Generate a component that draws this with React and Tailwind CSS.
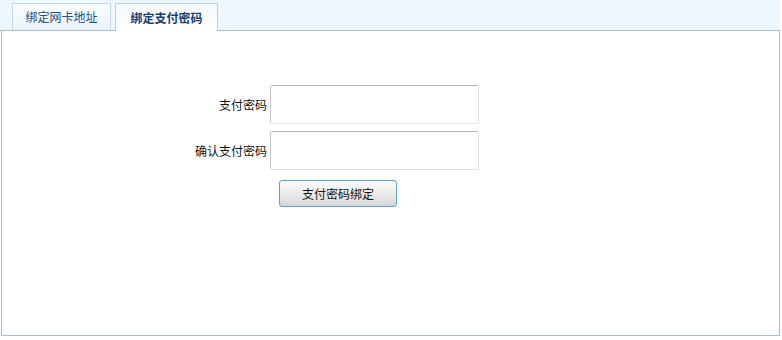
export default function App() {
  const font = { fontFamily: '"SimSun", "Noto Sans CJK SC", sans-serif' };
  return (
    <div className="w-[782px] h-[340px] bg-white text-[12px]" style={font}>
      {/* tabs */}
      <div className="flex items-end h-[31px] bg-[#eef6fe] pl-[12px] pr-[2px] border-b border-[#a3c0d9] mr-[2px]">
        <div className="w-[99px] h-[27px] mr-[4px] flex items-center justify-center border border-b-0 border-[#c5d8e8] bg-gradient-to-b from-[#fafdff] to-[#eaf3fb] text-[#24507e]">
          绑定网卡地址
        </div>
        <div className="w-[103px] h-[28px] -mb-px flex items-center justify-center border border-b-0 border-[#b9cfe2] bg-gradient-to-b from-[#f3f8fd] to-white font-bold text-[#1a4070]">
          绑定支付密码
        </div>
      </div>
      {/* panel */}
      <div className="h-[305px] mx-[1px] mr-[2px] border border-t-0 border-[#a3c0d9] pt-[54px]">
        <div className="flex flex-col gap-[7px]">
          <div className="flex items-center">
            <div className="w-[268px] pr-[3px] text-right text-[#111]">支付密码</div>
            <input className="w-[209px] h-[39px] border border-t-[#b8b8b8] border-l-[#c8c8c8] border-r-[#e2e2e2] border-b-[#e2e2e2] rounded-[2px] outline-none" />
          </div>
          <div className="flex items-center">
            <div className="w-[268px] pr-[3px] text-right text-[#111]">确认支付密码</div>
            <input className="w-[209px] h-[39px] border border-t-[#b8b8b8] border-l-[#c8c8c8] border-r-[#e2e2e2] border-b-[#e2e2e2] rounded-[2px] outline-none" />
          </div>
        </div>
        <div className="pl-[277px] pt-[10px]">
          <button className="w-[118px] h-[27px] rounded-[3px] border border-[#5ea4cc] bg-gradient-to-b from-[#fbfbfb] via-[#ececec] to-[#d6d6d6] text-[#111] text-[12px]">
            支付密码绑定
          </button>
        </div>
      </div>
    </div>
  );
}
